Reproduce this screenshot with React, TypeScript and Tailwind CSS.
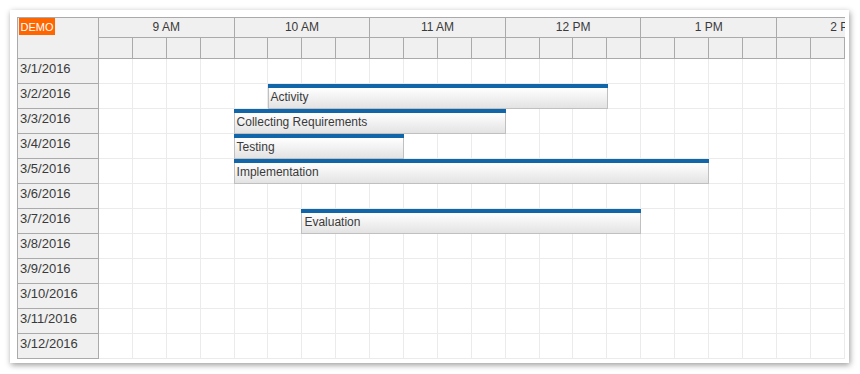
const CELL = 33.9;
const HOURS = ["9 AM", "10 AM", "11 AM", "12 PM", "1 PM", "2 PM"];
const CELLS = 22;

const days = Array.from({ length: 12 }, (_, i) => `3/${i + 1}/2016`);

type Ev = { text: string; row: number; start: number; end: number };

const events: Ev[] = [
  { text: "Activity", row: 1, start: 5, end: 15 },
  { text: "Collecting Requirements", row: 2, start: 4, end: 12 },
  { text: "Testing", row: 3, start: 4, end: 9 },
  { text: "Implementation", row: 4, start: 4, end: 18 },
  { text: "Evaluation", row: 6, start: 6, end: 16 },
];

function EventBox({ ev }: { ev: Ev }) {
  return (
    <div
      className="absolute h-[25px] flex flex-col"
      style={{
        top: ev.row * 25,
        left: ev.start * CELL - 1,
        width: (ev.end - ev.start) * CELL + 1,
      }}
    >
      <div className="h-[4px] bg-[#1066a8]" />
      <div className="flex-1 border-x border-b border-[#c0c0c0] bg-linear-to-b from-white to-[#e3e3e3] pl-[2px] pt-[2px] text-[12px] leading-[15px] text-[#3a3a3a] whitespace-nowrap overflow-hidden">
        {ev.text}
      </div>
    </div>
  );
}

export default function App() {
  return (
    <div className="min-h-screen bg-white pt-[10px] pl-[10px] font-['Liberation_Sans',Arial,sans-serif]">
      <div className="w-[839px] h-[353px] bg-white pt-[7px] pl-[7px] shadow-[1px_2px_6px_rgba(0,0,0,0.4)]">
        <div className="flex w-[828px] border-t border-l border-[#aaa]">
          {/* row headers */}
          <div className="w-[81px] shrink-0 border-r border-[#aaa] bg-[#f0f0f0]">
            <div className="h-[41px] border-b border-[#aaa] pl-[1px]">
              <div className="w-[36px] h-[17px] pt-[2px] bg-[#ff6600] text-white text-[11px] leading-[15px] text-center">
                DEMO
              </div>
            </div>
            {days.map((d) => (
              <div
                key={d}
                className="h-[25px] border-b border-[#aaa] pl-[2px] pt-[2px] text-[13px] leading-[16px] text-[#3a3a3a]"
              >
                {d}
              </div>
            ))}
          </div>

          {/* timeline */}
          <div className="w-[746px] overflow-hidden">
            <div className="flex h-[20px] border-b border-[#aaa] bg-[#f0f0f0] w-[900px]">
              {HOURS.map((h) => (
                <div
                  key={h}
                  className="shrink-0 border-r border-[#aaa] text-center text-[12px] leading-[18px] text-[#3a3a3a]"
                  style={{ width: CELL * 4 }}
                >
                  {h}
                </div>
              ))}
            </div>
            <div className="flex h-[21px] border-b border-[#aaa] bg-[#f0f0f0] w-[900px]">
              {Array.from({ length: CELLS + 2 }, (_, i) => (
                <div
                  key={i}
                  className="shrink-0 border-r border-[#aaa]"
                  style={{ width: CELL }}
                />
              ))}
            </div>
            <div className="relative bg-white">
              {days.map((d) => (
                <div key={d} className="flex h-[25px] w-[900px]">
                  {Array.from({ length: CELLS + 2 }, (_, i) => (
                    <div
                      key={i}
                      className="shrink-0 border-r border-b border-[#ebebeb]"
                      style={{ width: CELL }}
                    />
                  ))}
                </div>
              ))}
              {events.map((ev) => (
                <EventBox key={ev.text} ev={ev} />
              ))}
            </div>
          </div>
        </div>
      </div>
    </div>
  );
}
